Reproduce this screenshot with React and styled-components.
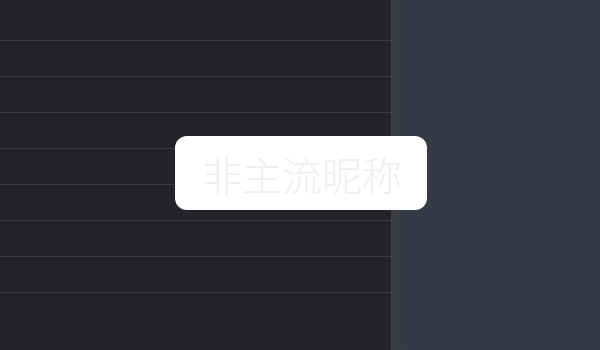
import React from "react";
import styled, { createGlobalStyle } from "styled-components";

const Global = createGlobalStyle`
  html, body { margin: 0; padding: 0; background: #232429; }
  #root { width: 600px; height: 350px; }
`;

const Page = styled.div`
  position: relative;
  display: flex;
  width: 600px;
  height: 350px;
  overflow: hidden;
  font-family: "Noto Sans CJK SC", "Noto Sans", sans-serif;
`;

const ListPanel = styled.div`
  width: 391px;
  flex: none;
  background: #232429;
  padding-top: 5px;
  box-sizing: border-box;
  display: flex;
  flex-direction: column;
`;

const Row = styled.div`
  height: 36px;
  flex: none;
  box-sizing: border-box;
  border-bottom: 1px solid #3a3b41;
`;

const SidePanel = styled.div`
  flex: 1;
  background: #373a46;
  border-left: 1px solid #404147;
  box-shadow: inset 10px 0 8px -5px rgba(62, 62, 66, 0.95);
`;

const Toast = styled.div`
  position: absolute;
  left: 175px;
  top: 136px;
  width: 252px;
  height: 74px;
  border-radius: 12px;
  background: #ffffff;
  display: flex;
  align-items: center;
  justify-content: center;
`;

const ToastText = styled.span`
  font-family: "Noto Sans CJK SC", sans-serif;
  font-size: 40px;
  font-weight: 300;
  line-height: 1;
  color: #efefef;
  margin-top: 2px;
  margin-left: 2px;
`;

export default function App() {
  const rows = Array.from({ length: 8 });
  return (
    <>
      <Global />
      <Page>
        <ListPanel>
          {rows.map((_, i) => (
            <Row key={i} />
          ))}
        </ListPanel>
        <SidePanel />
        <Toast>
          <ToastText>非主流昵称</ToastText>
        </Toast>
      </Page>
    </>
  );
}
